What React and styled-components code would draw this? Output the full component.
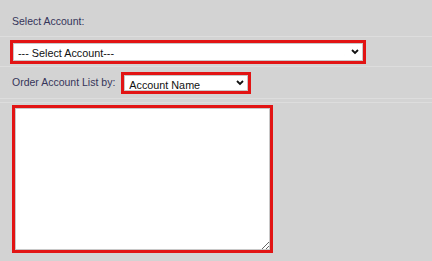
import styled, { createGlobalStyle } from 'styled-components';

const GlobalStyle = createGlobalStyle`
  html, body {
    margin: 0;
    padding: 0;
    background: #d3d3d3;
    font-family: "Liberation Sans", Arial, sans-serif;
  }
`;

const Page = styled.div`
  width: 432px;
  height: 261px;
  overflow: hidden;
  background: #d3d3d3;
`;

const Row = styled.div`
  display: flex;
  align-items: ${({ $align }) => $align || 'center'};
  gap: 6px;
  height: ${({ $h }) => $h}px;
  padding: ${({ $pad }) => $pad || '0 0 0 10px'};
  box-sizing: border-box;
  border-bottom: 1px solid #dddddd;
`;

const Label = styled.span`
  font-size: 10.5px;
  color: #35355a;
  padding-left: 2px;
  line-height: 13px;
`;

const SelectWrap = styled.div`
  position: relative;
  width: ${({ $w }) => $w}px;
  height: ${({ $h }) => $h}px;
  box-sizing: border-box;
  border: 3px solid #e31414;
  background: #fff;
  box-shadow: inset 0 0 0 1px #c8c8c8;
`;

const NativeSelect = styled.select`
  appearance: none;
  -webkit-appearance: none;
  width: 100%;
  height: 100%;
  border: none;
  outline: none;
  background: transparent;
  font-family: "Liberation Sans", Arial, sans-serif;
  font-size: 10.8px;
  color: #111;
  padding: 0 0 0 ${({ $pl }) => $pl || 4}px;
  margin: 0;
`;

const Chevron = styled.svg`
  position: absolute;
  right: 4px;
  top: 50%;
  transform: translateY(-50%);
  pointer-events: none;
`;

const NotesArea = styled.div`
  padding-top: 2px;
`;

const TextBox = styled.textarea`
  display: block;
  width: 261px;
  height: 148px;
  box-sizing: border-box;
  border: 3px solid #e31414;
  box-shadow: inset 0 0 0 1px #c8c8c8;
  background: #fff;
  margin: 0 0 0 12px;
  resize: both;
  outline: none;
`;

const Arrow = () => (
  <Chevron width="8" height="6" viewBox="0 0 8 6">
    <path d="M1 1 L4 4 L7 1" fill="none" stroke="#111" strokeWidth="1.8" />
  </Chevron>
);

export default function App() {
  return (
    <Page>
      <GlobalStyle />
      <Row $h={37} $align="flex-end" $pad="0 0 8px 10px">
        <Label>Select Account:</Label>
      </Row>
      <Row $h={30} $pad="1px 0 0 10px">
        <SelectWrap $w={356} $h={24}>
          <NativeSelect $pl={5}>
            <option>--- Select Account---</option>
          </NativeSelect>
          <Arrow />
        </SelectWrap>
      </Row>
      <Row $h={32} $pad="0 0 0 10px">
        <Label>Order Account List by:</Label>
        <SelectWrap $w={130} $h={22}>
          <NativeSelect $pl={5}>
            <option>Account Name</option>
            <option>Account Number</option>
          </NativeSelect>
          <Arrow />
        </SelectWrap>
      </Row>
      <Row $h={4} $pad="0" />
      <NotesArea>
        <TextBox />
      </NotesArea>
    </Page>
  );
}
